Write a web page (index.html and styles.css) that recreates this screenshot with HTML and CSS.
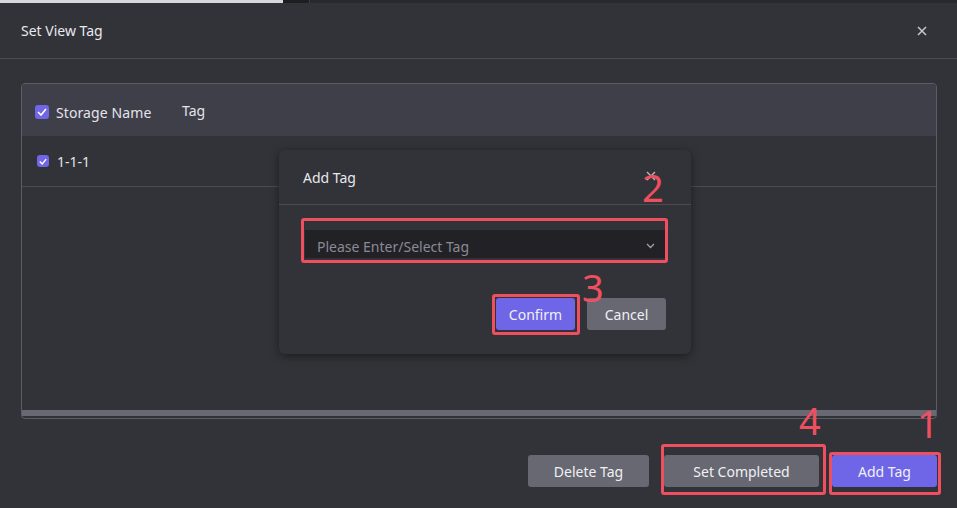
FILE: index.html
```html
<!DOCTYPE html>
<html>
<head>
<meta charset="utf-8">
<link rel="stylesheet" href="styles.css">
</head>
<body>
<div class="topstrip"><span class="ts-light"></span><span class="ts-dark"></span><span class="ts-rest"></span></div>
<div class="dialog">
  <div class="dlg-head">
    <span class="dlg-title">Set View Tag</span>
    <svg class="close" width="10" height="10" viewBox="0 0 10 10"><path d="M1 1L9 9M9 1L1 9" stroke="#c8c8d0" stroke-width="1.5"/></svg>
  </div>
  <div class="dlg-body">
    <div class="table">
      <div class="thead">
        <div class="cell name"><span class="cb"><svg width="10" height="8" viewBox="0 0 10 8"><path d="M1 4L4 7L9 1" fill="none" stroke="#fff" stroke-width="1.6"/></svg></span>Storage Name</div>
        <div class="cell tag">Tag</div>
      </div>
      <div class="trow">
        <div class="cell name"><span class="cb small"><svg width="8" height="7" viewBox="0 0 10 8"><path d="M1 4L4 7L9 1" fill="none" stroke="#fff" stroke-width="1.8"/></svg></span>1-1-1</div>
      </div>
      <div class="tfill"></div>
      <div class="scrollbar"></div>
    </div>
  </div>
  <div class="dlg-foot">
    <button class="btn gray">Delete Tag</button>
    <button class="btn gray wide">Set Completed</button>
    <button class="btn purple">Add Tag</button>
  </div>
</div>

<div class="modal">
  <div class="m-head">
    <span>Add Tag</span>
    <svg class="m-close" width="10" height="10" viewBox="0 0 10 10"><path d="M1 1L9 9M9 1L1 9" stroke="#b8b8c0" stroke-width="1.4"/></svg>
  </div>
  <div class="m-body">
    <div class="select">
      <span>Please Enter/Select Tag</span>
      <svg width="9" height="6" viewBox="0 0 9 6"><path d="M1 1L4.5 4.5L8 1" fill="none" stroke="#a0a0a8" stroke-width="1.3"/></svg>
    </div>
  </div>
  <div class="m-foot">
    <button class="btn purple small">Confirm</button>
    <button class="btn gray small">Cancel</button>
  </div>
</div>

<div class="mark box-select"></div>
<div class="mark box-confirm"></div>
<div class="mark box-set"></div>
<div class="mark box-add"></div>
<span class="num n2">2</span>
<span class="num n3">3</span>
<span class="num n4">4</span>
<span class="num n1">1</span>
</body>
</html>
```
FILE: styles.css
```css
* { box-sizing: border-box; }
html, body { margin: 0; padding: 0; }
body {
  width: 957px; height: 508px; overflow: hidden;
  background: #323338;
  font-family: "Noto Sans", "Open Sans", sans-serif;
  font-size: 14px;
  color: #e4e4ea;
  position: relative;
}
.topstrip { display: flex; height: 3px; }
.ts-light { width: 283px; background: #d9d9dc; }
.ts-dark { width: 27px; background: #1e1e21; border-right: 1px solid #3a3a40; }
.ts-rest { flex: 1; background: #29292d; }

.dlg-head {
  height: 56px;
  display: flex; align-items: center; justify-content: space-between;
  padding: 0 30px 0 21px;
  border-bottom: 1px solid #4b4b52;
}
.dlg-title { font-size: 14px; color: #e8e8ee; }
.close { display: block; }

.dlg-body { padding: 24px 20px 0 21px; }
.table {
  height: 336px;
  border: 1px solid #5c5c66;
  border-radius: 4px;
  display: flex; flex-direction: column;
  overflow: hidden;
}
.thead {
  height: 52px; background: #3f3f4a;
  display: flex; align-items: center;
  padding-top: 4px;
}
.cell { display: flex; align-items: center; }
.thead .name { width: 160px; padding-left: 13px; letter-spacing: 0.1px; }
.thead .tag { margin-top: -4px; }
.cb {
  width: 14px; height: 14px; border-radius: 3px;
  background: #7167e6; margin-right: 7px;
  display: inline-flex; align-items: center; justify-content: center;
}
.cb.small { width: 12px; height: 12px; margin-right: 8px; }
.trow {
  height: 51px; border-bottom: 1px solid #4b4b52;
  display: flex; align-items: center;
}
.trow .name { padding-left: 15px; }
.tfill { flex: 1; }
.scrollbar { height: 6px; background: #696974; margin-bottom: 2px; }

.dlg-foot {
  display: flex; justify-content: flex-end; gap: 15px;
  padding: 36px 20px 0 0;
}
.btn {
  font-family: inherit; font-size: 14px; color: #f0f0f4;
  border: none; border-radius: 3px;
  height: 32px; padding: 0 26px;
  cursor: pointer;
}
.btn.gray { background: #686873; }
.btn.purple { background: #6e66e6; }
.btn.wide { width: 155px; padding: 0; }
.btn.gray:first-child { width: 121px; padding: 0; }
.dlg-foot .purple { width: 105px; padding: 0; margin-left: -2px; }

.modal {
  position: absolute; left: 279px; top: 150px;
  width: 412px; height: 204px;
  background: #323338;
  border-radius: 6px;
  box-shadow: 0 2px 10px rgba(0,0,0,0.45);
}
.m-head {
  height: 55px;
  display: flex; align-items: center; justify-content: space-between;
  padding: 0 35px 0 24px;
  border-bottom: 1px solid #4b4b52;
  color: #e8e8ee;
}
.m-close { margin-top: -2px; }
.m-body { padding: 25px 26px 0 26px; }
.select {
  height: 28px;
  background: #222226;
  display: flex; align-items: center; justify-content: space-between;
  padding: 4px 10px 0 12px;
  color: #8a8a96;
}
.m-foot {
  display: flex; justify-content: flex-end; gap: 12px;
  padding: 40px 25px 0 0;
}
.btn.small { width: 79px; padding: 0; }

.mark {
  position: absolute;
  border: 3px solid #ef4f5f;
  border-radius: 3px;
}
.box-select { left: 301px; top: 218px; width: 367px; height: 45px; }
.box-confirm { left: 492px; top: 294px; width: 88px; height: 41px; }
.box-set { left: 661px; top: 444px; width: 165px; height: 51px; }
.box-add { left: 829px; top: 452px; width: 112px; height: 43px; }

.num {
  position: absolute;
  font-family: "Noto Sans", sans-serif;
  font-size: 38px; line-height: 1;
  color: #ef4f5f;
  font-weight: 400;
}
.n2 { left: 642px; top: 168px; }
.n3 { left: 582px; top: 268px; }
.n4 { left: 799px; top: 401px; }
.n1 { left: 917px; top: 404px; }
```
